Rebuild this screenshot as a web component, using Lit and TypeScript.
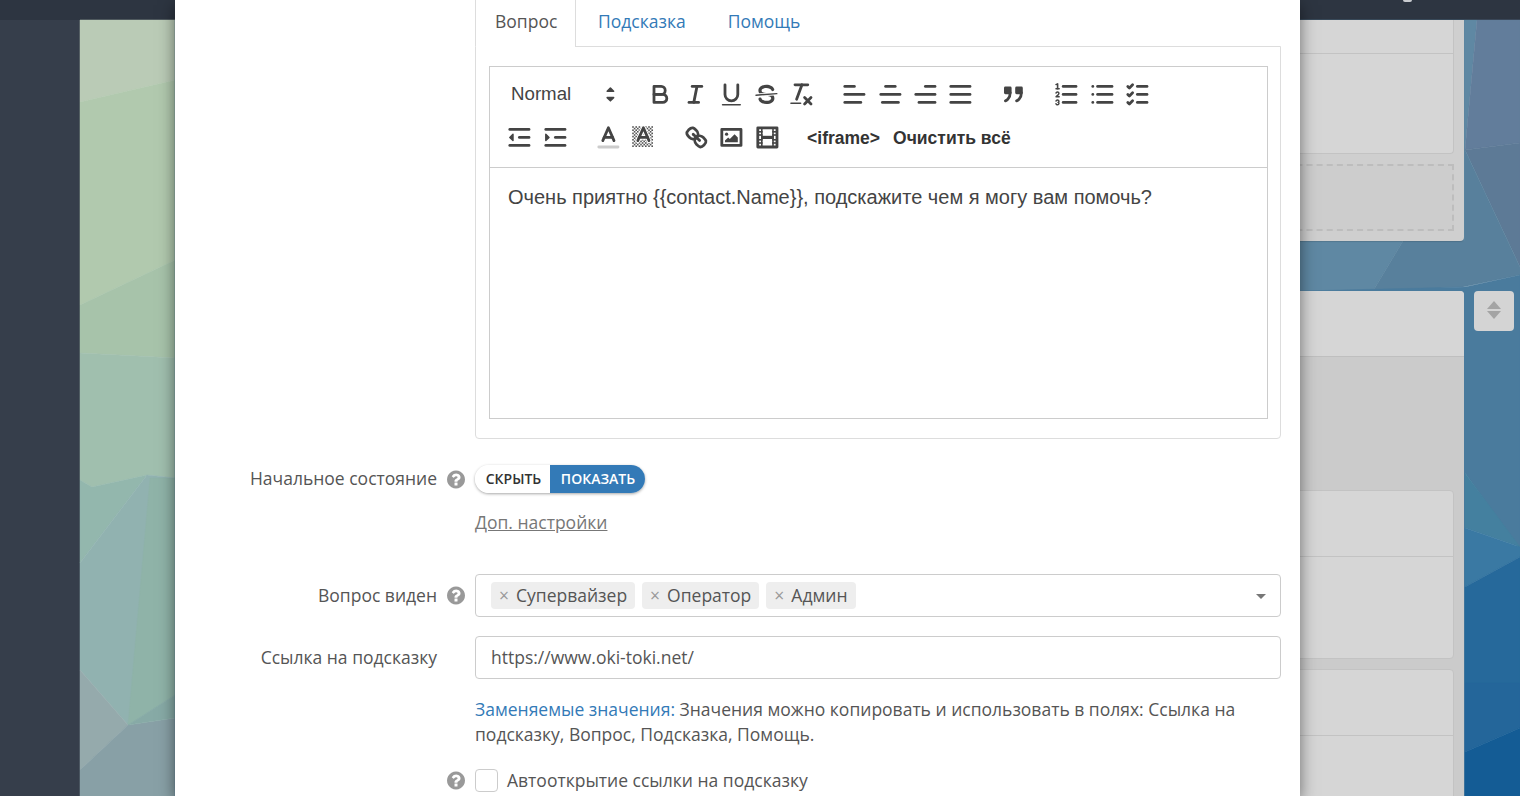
import { LitElement, html, css, svg } from "lit";
import { customElement } from "lit/decorators.js";

const bgPolys: [string, string][] = [
  ["80,20 175,20 175,80 80,102", "#bacbb6"],
  ["80,102 175,80 175,260 80,305", "#b1c9ae"],
  ["80,305 175,260 175,358 80,353", "#a7c3aa"],
  ["80,353 175,358 175,478 147,475 92,487 80,480", "#a0bfae"],
  ["80,480 92,487 147,475 80,563", "#93b7ad"],
  ["147,475 175,478 175,695 128,725 80,670 80,563", "#91b2b0"],
  ["150,478 175,478 175,695 128,725", "#8fb3a8"],
  ["80,670 128,725 80,770", "#95aaac"],
  ["128,725 175,718 175,796 80,796 80,770", "#88a0a6"],
  ["128,725 175,695 175,718", "#87aaa6"],
  ["175,20 1300,20 1300,796 175,796", "#5f86a3"],
  ["1300,20 1477,20 1465,150 1465,241 1403,241 1373,291 1300,291", "#5f88a3"],
  ["1477,20 1520,20 1520,143 1465,150", "#627d9b"],
  ["1465,150 1520,143 1520,267", "#5d7a96"],
  ["1465,150 1520,267 1520,275 1463,287 1373,291 1403,241 1465,241", "#58809c"],
  ["1300,291 1465,287 1520,275 1520,550 1465,473 1465,796 1300,796", "#4a7b9d"],
  ["1465,473 1520,547 1465,528", "#44809f"],
  ["1465,528 1520,547 1520,557 1465,587", "#3a79a3"],
  ["1465,587 1520,557 1520,683 1465,683", "#26699b"],
  ["1465,683 1520,683 1520,728 1465,752", "#24669a"],
  ["1465,752 1520,728 1520,796 1465,796", "#145c95"],
];

const checker: [number, number][] = [];
for (let y = 2; y < 15; y++) for (let x = 2; x < 15; x++) if ((x + y) % 2 === 0) checker.push([x, y]);

const icons: Record<string, unknown> = {
  bold: svg`<path class="s" d="M5,4H9.5A2.5,2.5,0,0,1,12,6.5v0A2.5,2.5,0,0,1,9.5,9H5V4Z"/><path class="s" d="M5,9h5.5A2.5,2.5,0,0,1,13,11.5v0A2.5,2.5,0,0,1,10.5,14H5V9Z"/>`,
  italic: svg`<line class="s" x1="7" x2="13" y1="4" y2="4"/><line class="s" x1="5" x2="11" y1="14" y2="14"/><line class="s" x1="8" x2="10" y1="14" y2="4"/>`,
  underline: svg`<path class="s" d="M5,3V9a4.012,4.012,0,0,0,4,4H9a4.012,4.012,0,0,0,4-4V3"/><rect class="f" height="1" rx="0.5" ry="0.5" width="12" x="3" y="15"/>`,
  strike: svg`<line class="s thin" x1="15.5" x2="2.5" y1="8.5" y2="9.5"/><path class="f" d="M9.007,8C6.542,7.791,6,7.519,6,6.5,6,5.792,7.283,5,9,5c1.571,0,2.765.679,2.969,1.309a1,1,0,0,0,1.9-.617C13.356,4.106,11.354,3,9,3,6.2,3,4,4.538,4,6.5a3.2,3.2,0,0,0,.5,1.843Z"/><path class="f" d="M8.984,10C11.457,10.208,12,10.479,12,11.5c0,.708-1.283,1.5-3,1.5-1.571,0-2.765-.679-2.969-1.309a1,1,0,1,0-1.9.617C4.644,13.894,6.646,15,9,15c2.8,0,5-1.538,5-3.5a3.2,3.2,0,0,0-.5-1.843Z"/>`,
  clean: svg`<line class="s" x1="5" x2="13" y1="3" y2="3"/><line class="s" x1="6" x2="9.35" y1="12" y2="3"/><line class="s" x1="11" x2="15" y1="11" y2="15"/><line class="s" x1="15" x2="11" y1="11" y2="15"/><rect class="f" height="1" rx="0.5" ry="0.5" width="7" x="2" y="14"/>`,
  left: svg`<line class="s" x1="3" x2="15" y1="9" y2="9"/><line class="s" x1="3" x2="13" y1="14" y2="14"/><line class="s" x1="3" x2="9" y1="4" y2="4"/>`,
  center: svg`<line class="s" x1="15" x2="3" y1="9" y2="9"/><line class="s" x1="14" x2="4" y1="14" y2="14"/><line class="s" x1="12" x2="6" y1="4" y2="4"/>`,
  right: svg`<line class="s" x1="15" x2="3" y1="9" y2="9"/><line class="s" x1="15" x2="5" y1="14" y2="14"/><line class="s" x1="15" x2="9" y1="4" y2="4"/>`,
  justify: svg`<line class="s" x1="15" x2="3" y1="9" y2="9"/><line class="s" x1="15" x2="3" y1="14" y2="14"/><line class="s" x1="15" x2="3" y1="4" y2="4"/>`,
  quote: svg`<rect class="f s" height="3" width="3" x="4" y="5"/><rect class="f s" height="3" width="3" x="11" y="5"/><path class="s" d="M7,8c0,4.031-3,5-3,5"/><path class="s" d="M14,8c0,4.031-3,5-3,5"/>`,
  ordered: svg`<line class="s" x1="7" x2="15" y1="4" y2="4"/><line class="s" x1="7" x2="15" y1="9" y2="9"/><line class="s" x1="7" x2="15" y1="14" y2="14"/><line class="s thin" x1="2.5" x2="4.5" y1="5.5" y2="5.5"/><path class="f" d="M3.5,6A0.5,0.5,0,0,1,3,5.5V3.085l-0.276.138A0.5,0.5,0,0,1,2.053,3c-0.124-.247-0.023-0.324.224-0.447l1-.5A0.5,0.5,0,0,1,4,2.5v3A0.5,0.5,0,0,1,3.5,6Z"/><path class="s thin" d="M4.5,10.5h-2c0-.234,1.85-1.076,1.85-2.234A0.959,0.959,0,0,0,2.5,8.156"/><path class="s thin" d="M2.5,14.846a0.959,0.959,0,0,0,1.85-.109A0.7,0.7,0,0,0,3.75,14a0.688,0.688,0,0,0,.6-0.736,0.959,0.959,0,0,0-1.85-.109"/>`,
  bullet: svg`<line class="s" x1="6" x2="15" y1="4" y2="4"/><line class="s" x1="6" x2="15" y1="9" y2="9"/><line class="s" x1="6" x2="15" y1="14" y2="14"/><line class="s" x1="3" x2="3" y1="4" y2="4"/><line class="s" x1="3" x2="3" y1="9" y2="9"/><line class="s" x1="3" x2="3" y1="14" y2="14"/>`,
  check: svg`<line class="s" x1="9" x2="15" y1="4" y2="4"/><polyline class="s" points="3 4 4 5 6 3"/><line class="s" x1="9" x2="15" y1="14" y2="14"/><polyline class="s" points="3 14 4 15 6 13"/><line class="s" x1="9" x2="15" y1="9" y2="9"/><polyline class="s" points="3 9 4 10 6 8"/>`,
  outdent: svg`<line class="s" x1="3" x2="15" y1="14" y2="14"/><line class="s" x1="3" x2="15" y1="4" y2="4"/><line class="s" x1="9" x2="15" y1="9" y2="9"/><polyline class="f s thin" points="5 7 5 11 3 9 5 7"/>`,
  indent: svg`<line class="s" x1="3" x2="15" y1="14" y2="14"/><line class="s" x1="3" x2="15" y1="4" y2="4"/><line class="s" x1="9" x2="15" y1="9" y2="9"/><polyline class="f s thin" points="3 7 3 11 5 9 3 7"/>`,
  color: svg`<line class="s label" x1="3" x2="15" y1="15" y2="15"/><polyline class="s" points="5.5 11 9 3 12.5 11"/><line class="s" x1="11.63" x2="6.38" y1="9" y2="9"/>`,
  background: svg`${checker.map(([x, y]) => svg`<rect class="f dots" x="${x}" y="${y}" width="1" height="1"/>`)}<polyline class="halo" points="5.5 11 9 3 12.5 11"/><line class="halo" x1="11.63" x2="6.38" y1="9" y2="9"/><polyline class="s" points="5.5 11 9 3 12.5 11"/><line class="s" x1="11.63" x2="6.38" y1="9" y2="9"/>`,
  link: svg`<line class="s" x1="7" x2="11" y1="7" y2="11"/><path class="s" d="M8.9,4.577a3.476,3.476,0,0,1,.36,4.679A3.476,3.476,0,0,1,4.577,8.9C3.185,7.5,2.035,6.4,4.217,4.217S7.5,3.185,8.9,4.577Z"/><path class="s" d="M13.423,9.1a3.476,3.476,0,0,0-4.679-.36,3.476,3.476,0,0,0,.36,4.679c1.392,1.392,2.5,2.542,4.679.36S14.815,10.5,13.423,9.1Z"/>`,
  image: svg`<rect class="s" height="10" width="12" x="3" y="4"/><circle class="f" cx="6" cy="7" r="1"/><polyline class="f" points="5 12 5 11 7 9 8 10 11 7 13 9 13 12 5 12"/>`,
  video: svg`<rect class="s" height="12" width="12" x="3" y="3"/><rect class="f" height="12" width="1" x="5" y="3"/><rect class="f" height="12" width="1" x="12" y="3"/><rect class="f" height="2" width="8" x="5" y="8"/><rect class="f" height="1" width="3" x="3" y="5"/><rect class="f" height="1" width="3" x="3" y="7"/><rect class="f" height="1" width="3" x="3" y="10"/><rect class="f" height="1" width="3" x="3" y="12"/><rect class="f" height="1" width="3" x="12" y="5"/><rect class="f" height="1" width="3" x="12" y="7"/><rect class="f" height="1" width="3" x="12" y="10"/><rect class="f" height="1" width="3" x="12" y="12"/>`,
};

const row1: string[][] = [
  ["bold", "italic", "underline", "strike", "clean"],
  ["left", "center", "right", "justify"],
  ["quote"],
  ["ordered", "bullet", "check"],
];
const row2: string[][] = [
  ["outdent", "indent"],
  ["color", "background"],
  ["link", "image", "video"],
];

const QUESTION =
  "M896 1376v-192q0-14-9-23t-23-9h-192q-14 0-23 9t-9 23v192q0 14 9 23t23 9h192q14 0 23-9t9-23zm256-672q0-88-55.5-163t-138.5-116-170-41q-243 0-371 213-15 24 8 42l132 100q7 6 19 6 16 0 25-12 53-68 86-92 34-24 86-24 48 0 85.5 26t37.5 59q0 38-20 61t-68 45q-63 28-115.5 86.5t-52.5 125.5v36q0 14 9 23t23 9h192q14 0 23-9t9-23q0-19 21.5-49.5t54.5-49.5q32-18 49-28.5t46-35 44.5-48 28-60.5 12.5-81zm384 192q0 209-103 385.5t-279.5 279.5-385.5 103-385.5-103-279.5-279.5-103-385.5 103-385.5 279.5-279.5 385.5-103 385.5 103 279.5 279.5 103 385.5z";

@customElement("app-root")
export class AppRoot extends LitElement {
  static styles = css`
    :host {
      display: block;
      position: relative;
      width: 1520px;
      height: 796px;
      overflow: hidden;
      font-family: "Open Sans", sans-serif;
      font-size: 17.5px;
      color: #555;
    }
    .page {
      display: grid;
      grid-template-rows: 20px 1fr;
      height: 100%;
    }
    .topbar {
      background: #2d3541;
      display: flex;
      justify-content: flex-end;
      padding-right: 108px;
    }
    .avatar {
      width: 9px;
      height: 2px;
      background: #c9ccd0;
      border-radius: 0 0 4px 4px;
    }
    .body {
      display: grid;
      grid-template-columns: 80px 1fr;
      min-height: 0;
    }
    .sidebar {
      background: #363e4b;
    }
    .content {
      position: relative;
      display: grid;
      grid-template-columns: 400px 40px;
      grid-template-rows: 221px auto;
      row-gap: 50px;
      column-gap: 10px;
      justify-content: end;
      padding-right: 6px;
      min-height: 0;
    }
    .wallpaper {
      position: absolute;
      left: -80px;
      top: -20px;
      width: 1520px;
      height: 796px;
    }
    .card,
    .side-btn {
      position: relative;
    }
    .card-a {
      grid-column: 1;
      background: #cfcfcf;
      border-radius: 0 0 4px 4px;
      padding: 0 10px 10px 0;
      display: flex;
      flex-direction: column;
      box-shadow: 0 1px 1px rgba(0, 0, 0, 0.12);
    }
    .panel {
      background: #d6d6d6;
      border: 1px solid #c3c3c3;
      border-radius: 4px;
    }
    .panel-head {
      border-bottom: 1px solid #c3c3c3;
    }
    .panel-a {
      border-top: 0;
      border-radius: 0 0 4px 4px;
      height: 133px;
      flex: none;
    }
    .panel-a .panel-head {
      height: 33px;
    }
    .dashed {
      margin-top: 10px;
      flex: 1;
      border: 2px dashed #bdbdbd;
      background: #cdcdcd;
    }
    .card-b {
      grid-column: 1;
      grid-row: 2;
      background: #cbcbcb;
      border-radius: 4px 4px 0 0;
      height: 505px;
    }
    .card-b-head {
      height: 65px;
      background: #d6d6d6;
      border-radius: 4px 4px 0 0;
      border-bottom: 1px solid #bfbfbf;
    }
    .card-b-body {
      padding: 133px 10px 0 0;
      display: flex;
      flex-direction: column;
      gap: 10px;
    }
    .panel-b {
      box-sizing: border-box;
      height: 169px;
      flex: none;
    }
    .panel-b .panel-head {
      height: 65px;
    }
    .side-btn {
      grid-column: 2;
      grid-row: 2;
      width: 40px;
      height: 40px;
      background: #d4d4d4;
      border-radius: 4px;
      display: flex;
      align-items: center;
      justify-content: center;
    }
    .side-btn svg {
      width: 14px;
      height: 18px;
      fill: #a4a4a4;
      margin-top: -2px;
    }
    .modal {
      position: absolute;
      left: 175px;
      top: 0;
      width: 1125px;
      height: 796px;
      background: #fff;
      box-shadow: 0 5px 15px rgba(0, 0, 0, 0.5);
      box-sizing: border-box;
      padding-left: 300px;
      padding-right: 19px;
    }
    .tabs {
      display: flex;
      height: 46px;
      align-items: stretch;
      line-height: 43px;
    }
    .tab {
      padding: 0 21px;
      color: #337ab7;
      white-space: nowrap;
    }
    .tab.active {
      color: #555;
      border-left: 1px solid #ddd;
      border-right: 1px solid #ddd;
      padding: 0 0 0 19px;
      width: 101px;
      box-sizing: border-box;
      margin-right: 1px;
    }
    .tab-panel {
      border: 1px solid #ddd;
      height: 393px;
      box-sizing: border-box;
      padding: 19px 12px 0 13px;
      border-radius: 0 0 4px 4px;
    }
    .tab-panel-wrap {
      position: relative;
    }
    .tab-gap {
      position: absolute;
      left: 1px;
      top: 0;
      width: 99px;
      height: 1px;
      background: #fff;
    }
    .quill {
      border: 1px solid #ccc;
      font-family: "Liberation Sans", Arial, sans-serif;
    }
    .toolbar {
      border-bottom: 1px solid #ccc;
      padding: 12px 12px 15px;
      display: flex;
      flex-direction: column;
      gap: 13px;
    }
    .row {
      display: flex;
      gap: 17.5px;
      height: 30px;
      align-items: center;
    }
    .row.second {
      gap: 17.6px;
    }
    .group {
      display: flex;
    }
    .btn {
      width: 35.4px;
      height: 30px;
      display: flex;
      align-items: center;
      justify-content: center;
    }
    .btn svg {
      width: 28.8px;
      height: 28.8px;
      flex: none;
    }
    .s {
      fill: none;
      stroke: #444;
      stroke-width: 1.75;
      stroke-linecap: round;
      stroke-linejoin: round;
    }
    .f {
      fill: #444;
    }
    .s.f {
      fill: #444;
    }
    .dots {
      fill: #555;
    }
    .thin {
      stroke-width: 0.9;
    }
    .label {
      stroke: #ccc;
    }
    .halo {
      fill: none;
      stroke: #fff;
      stroke-width: 3;
      stroke-linecap: round;
      stroke-linejoin: round;
    }
    .picker {
      width: 123px;
      display: flex;
      align-items: center;
      justify-content: space-between;
      padding: 0 0 0 9px;
      box-sizing: border-box;
      font-size: 18.7px;
      color: #444;
      height: 30px;
    }
    .picker svg {
      width: 28.8px;
      height: 28.8px;
    }
    .picker polygon {
      fill: #444;
      stroke: #444;
      stroke-width: 1;
      stroke-linejoin: round;
    }
    .text-btn {
      font-weight: 700;
      font-size: 17.5px;
      color: #333;
      white-space: nowrap;
      margin-top: 2px;
    }
    .iframe-btn {
      margin-left: 4.6px;
      margin-right: -4.6px;
    }
    .editor {
      height: 250px;
      box-sizing: border-box;
      padding: 17px 18px;
      font-size: 20px;
      line-height: 25px;
      color: #444;
    }
    .form-row {
      display: flex;
      position: relative;
      align-items: center;
    }
    .label-col {
      position: absolute;
      right: calc(100% + 10px);
      display: flex;
      align-items: center;
      gap: 10px;
      white-space: nowrap;
    }
    .label-plain {
      right: calc(100% + 38px);
    }
    .label-text {
      padding-bottom: 2px;
    }
    .help {
      width: 18px;
      height: 21px;
      fill: #999;
      flex: none;
    }
    .toggle-row {
      margin-top: 26px;
      height: 28px;
    }
    .toggle {
      display: flex;
      height: 28px;
      width: 170px;
      border-radius: 14px;
      overflow: hidden;
      font-size: 14px;
      line-height: 28px;
      box-shadow: 0 1px 3px rgba(0, 0, 0, 0.35);
      box-sizing: border-box;
    }
    .toggle span {
      display: block;
      box-sizing: border-box;
      text-align: center;
      font-weight: 600;
    }
    .toggle .off {
      width: 75px;
      color: #333;
      background: #fff;
      padding-left: 2px;
    }
    .toggle .on {
      width: 95px;
      color: #fff;
      background: #337ab7;
      padding-left: 1px;
    }
    .more {
      display: block;
      margin-top: 17px;
      height: 24px;
      line-height: 24px;
      color: #777;
      text-decoration: underline;
    }
    .select-row {
      margin-top: 40px;
    }
    .select,
    .input {
      width: 100%;
      height: 43px;
      border: 1px solid #ccc;
      border-radius: 4px;
      box-sizing: border-box;
      display: flex;
      align-items: center;
      padding-left: 15px;
      color: #555;
      background: #fff;
    }
    .input {
      padding-bottom: 2px;
    }
    .select {
      gap: 7px;
      position: relative;
    }
    .tag {
      height: 27px;
      line-height: 27px;
      background: #eee;
      border-radius: 4px;
      padding: 0 8px;
      white-space: nowrap;
    }
    .tag i {
      font-style: normal;
      color: #999;
      margin-right: 7px;
    }
    .caret {
      position: absolute;
      right: 14px;
      top: 19px;
      width: 0;
      height: 0;
      border-left: 5px solid transparent;
      border-right: 5px solid transparent;
      border-top: 5px solid #777;
    }
    .input-row {
      margin-top: 19px;
    }
    .note {
      margin-top: 18px;
      line-height: 25px;
    }
    .note b {
      font-weight: 400;
      color: #337ab7;
    }
    .check-row {
      margin-top: 21px;
      height: 24px;
      gap: 9px;
    }
    .check {
      width: 23px;
      height: 23px;
      border: 1px solid #ccc;
      border-radius: 4px;
      box-sizing: border-box;
      flex: none;
    }
    .check-label {
      white-space: nowrap;
    }
  `;

  private help() {
    return html`<svg class="help" viewBox="0 0 1536 1792"><path d="${QUESTION}" /></svg>`;
  }

  private btn(name: string) {
    return html`<span class="btn"><svg viewBox="0 0 18 18">${icons[name]}</svg></span>`;
  }

  private groups(rows: string[][]) {
    return rows.map((g) => html`<span class="group">${g.map((n) => this.btn(n))}</span>`);
  }

  render() {
    return html`
      <div class="page">
        <div class="topbar"><div class="avatar"></div></div>
        <div class="body">
          <div class="sidebar"></div>
          <div class="content">
            <svg class="wallpaper" viewBox="0 0 1520 796" preserveAspectRatio="none">
              ${bgPolys.map(([p, c]) => svg`<polygon points="${p}" fill="${c}" stroke="${c}" stroke-width="0.5" />`)}
            </svg>
            <div class="card card-a">
              <div class="panel panel-a"><div class="panel-head"></div></div>
              <div class="dashed"></div>
            </div>
            <div class="card card-b">
              <div class="card-b-head"></div>
              <div class="card-b-body">
                <div class="panel panel-b"><div class="panel-head"></div></div>
                <div class="panel panel-b"><div class="panel-head"></div></div>
              </div>
            </div>
            <div class="side-btn">
              <svg viewBox="0 0 14 18"><path d="M7 0L14 8H0Z" /><path d="M0 10H14L7 18Z" /></svg>
            </div>
          </div>
        </div>
      </div>

      <div class="modal">
        <div class="tabs">
          <span class="tab active">Вопрос</span>
          <span class="tab">Подсказка</span>
          <span class="tab">Помощь</span>
        </div>
        <div class="tab-panel-wrap">
          <div class="tab-gap"></div>
          <div class="tab-panel">
            <div class="quill">
              <div class="toolbar">
                <div class="row">
                  <span class="picker">Normal
                    <svg viewBox="0 0 18 18"><polygon points="7 11 9 13 11 11 7 11" /><polygon points="7 7 9 5 11 7 7 7" /></svg>
                  </span>
                  ${this.groups(row1)}
                </div>
                <div class="row second">
                  ${this.groups(row2)}
                  <span class="text-btn iframe-btn">&lt;iframe&gt;</span>
                  <span class="text-btn">Очистить всё</span>
                </div>
              </div>
              <div class="editor">Очень приятно {{contact.Name}}, подскажите чем я могу вам помочь?</div>
            </div>
          </div>
        </div>

        <div class="form-row toggle-row">
          <div class="label-col"><span class="label-text">Начальное состояние</span> ${this.help()}</div>
          <div class="toggle"><span class="off">СКРЫТЬ</span><span class="on">ПОКАЗАТЬ</span></div>
        </div>
        <span class="more">Доп. настройки</span>

        <div class="form-row select-row">
          <div class="label-col"><span class="label-text">Вопрос виден</span> ${this.help()}</div>
          <div class="select">
            <span class="tag"><i>×</i>Супервайзер</span>
            <span class="tag"><i>×</i>Оператор</span>
            <span class="tag"><i>×</i>Админ</span>
            <span class="caret"></span>
          </div>
        </div>

        <div class="form-row input-row">
          <div class="label-col label-plain"><span class="label-text">Ссылка на подсказку</span></div>
          <div class="input">https://www.oki-toki.net/</div>
        </div>

        <div class="note"><b>Заменяемые значения:</b> Значения можно копировать и использовать в полях: Ссылка на подсказку, Вопрос, Подсказка, Помощь.</div>

        <div class="form-row check-row">
          <div class="label-col">${this.help()}</div>
          <div class="check"></div>
          <div class="check-label">Автооткрытие ссылки на подсказку</div>
        </div>
      </div>
    `;
  }
}
